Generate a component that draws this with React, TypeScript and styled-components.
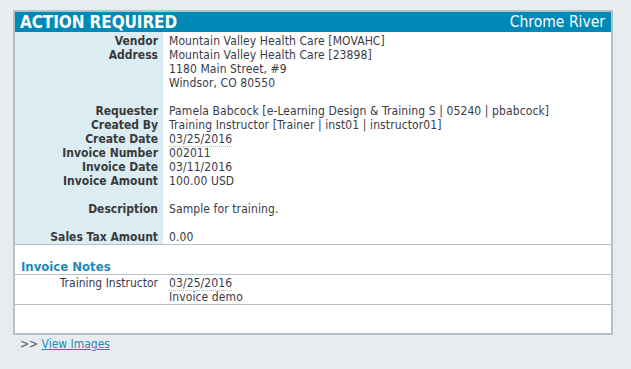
import React from 'react';
import styled, { createGlobalStyle } from 'styled-components';

const GlobalStyle = createGlobalStyle`
  html, body {
    margin: 0;
    padding: 0;
    background: #e8ecef;
  }
  body {
    font-family: "DejaVu Sans Condensed", "DejaVu Sans", Tahoma, sans-serif;
    font-size: 12px;
    color: #3b3b47;
  }
`;

const Page = styled.div`
  padding: 10px 0 0 13px;
  width: 631px;
  height: 369px;
  box-sizing: border-box;
`;

const Panel = styled.div`
  width: 600px;
  box-sizing: border-box;
  border: 2px solid #b3c2c7;
  background: #fff;
`;

const TitleBar = styled.div`
  display: flex;
  align-items: center;
  justify-content: space-between;
  height: 20px;
  padding: 0 6px 0 5px;
  background: #0088b6;
  color: #fff;
`;

const Title = styled.span`
  font-size: 17px;
  font-weight: bold;
  letter-spacing: -0.1px;
`;

const Brand = styled.span`
  font-size: 15.5px;
`;

const Details = styled.div`
  display: grid;
  grid-template-columns: 148px 1fr;
  line-height: 14px;
  padding-top: 2px;
  border-bottom: 1px solid #b3c2c7;
  background: linear-gradient(to right, #dbedf3 148px, #fff 148px);
`;

const Label = styled.div`
  text-align: right;
  padding-right: 5px;
  font-weight: bold;
  color: #3a3a3a;
  min-height: 14px;
`;

const Value = styled.div`
  padding-left: 6px;
  min-height: 14px;
  letter-spacing: 0.1px;
`;

const DateText = styled.span`
  border-bottom: 1px dotted #b8b8b8;
`;

const NotesTitle = styled.div`
  margin-top: 15px;
  padding: 0 6px;
  font-size: 13px;
  font-weight: bold;
  line-height: 14px;
  color: #1f8ab6;
  border-bottom: 1px solid #b3c2c7;
`;

const NoteRow = styled.div`
  display: grid;
  grid-template-columns: 148px 1fr;
  line-height: 14px;
  padding-top: 1px;
  border-bottom: 1px solid #b3c2c7;
`;

const NoteAuthor = styled.div`
  text-align: right;
  padding-right: 5px;
`;

const Footer = styled.div`
  height: 28px;
`;

const LinkLine = styled.div`
  margin-top: 2px;
  padding-left: 7px;
  line-height: 14px;
  color: #555;
`;

const Link = styled.a`
  color: #1f8ab6;
  text-decoration: underline;
  cursor: pointer;
`;

type Row = { label: string; lines: React.ReactNode[] };

const rows: Row[] = [
  { label: 'Vendor', lines: ['Mountain Valley Health Care [MOVAHC]'] },
  {
    label: 'Address',
    lines: ['Mountain Valley Health Care [23898]', '1180 Main Street, #9', 'Windsor, CO 80550'],
  },
  { label: '', lines: [''] },
  { label: 'Requester', lines: ['Pamela Babcock [e-Learning Design & Training S | 05240 | pbabcock]'] },
  { label: 'Created By', lines: ['Training Instructor [Trainer | inst01 | instructor01]'] },
  { label: 'Create Date', lines: [<DateText key="d">03/25/2016</DateText>] },
  { label: 'Invoice Number', lines: ['002011'] },
  { label: 'Invoice Date', lines: ['03/11/2016'] },
  { label: 'Invoice Amount', lines: ['100.00 USD'] },
  { label: '', lines: [''] },
  { label: 'Description', lines: ['Sample for training.'] },
  { label: '', lines: [''] },
  { label: 'Sales Tax Amount', lines: ['0.00'] },
];

export default function App() {
  return (
    <Page>
      <GlobalStyle />
      <Panel>
        <TitleBar>
          <Title>ACTION REQUIRED</Title>
          <Brand>Chrome River</Brand>
        </TitleBar>
        <Details>
          {rows.map((row, i) => (
            <React.Fragment key={i}>
              <Label>{row.label}</Label>
              <Value>
                {row.lines.map((line, j) => (
                  <div key={j}>{line}</div>
                ))}
              </Value>
            </React.Fragment>
          ))}
        </Details>
        <NotesTitle>Invoice Notes</NotesTitle>
        <NoteRow>
          <NoteAuthor>Training Instructor</NoteAuthor>
          <Value>
            <div>
              <DateText>03/25/2016</DateText>
            </div>
            <div>Invoice demo</div>
          </Value>
        </NoteRow>
        <Footer />
      </Panel>
      <LinkLine>
        &gt;&gt; <Link>View Images</Link>
      </LinkLine>
    </Page>
  );
}
